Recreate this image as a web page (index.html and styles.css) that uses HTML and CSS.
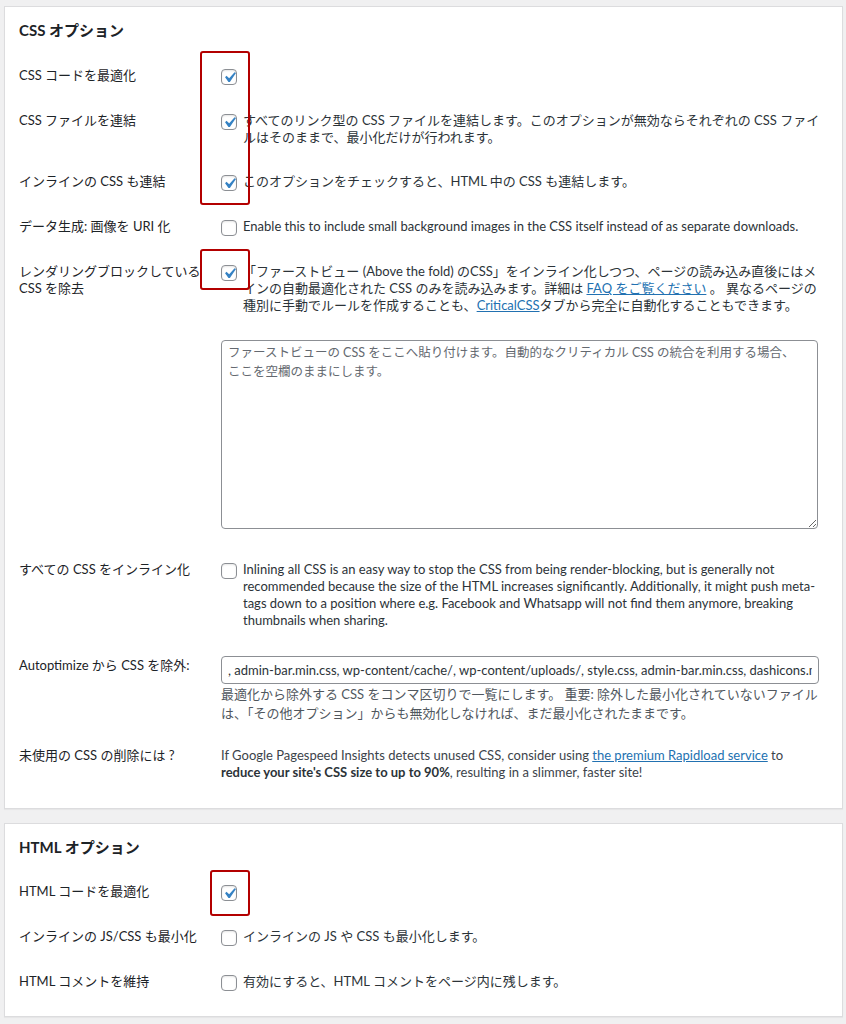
FILE: index.html
```html
<!DOCTYPE html>
<html lang="ja">
<head>
<meta charset="utf-8">
<title>Autoptimize CSS / HTML オプション</title>
<link rel="stylesheet" href="styles.css">
</head>
<body>
<div class="page">

  <section class="card card-css">
    <h2 class="card-title">CSS オプション</h2>

    <div class="row">
      <div class="label">CSS コードを最適化</div>
      <div class="control">
        <span class="opt"><span class="cb on"><svg viewBox="0 0 20 20"><path d="M14.83 4.89l1.34.94-5.81 8.38H9.02L5.78 9.67l1.34-1.25 2.57 2.4z"/></svg></span></span>
      </div>
    </div>

    <div class="row">
      <div class="label">CSS ファイルを連結</div>
      <div class="control">
        <span class="opt"><span class="cb on"><svg viewBox="0 0 20 20"><path d="M14.83 4.89l1.34.94-5.81 8.38H9.02L5.78 9.67l1.34-1.25 2.57 2.4z"/></svg></span><span class="opt-text">すべてのリンク型の CSS ファイルを連結します。このオプションが無効ならそれぞれの CSS ファイ<br>ルはそのままで、最小化だけが行われます。</span></span>
      </div>
    </div>

    <div class="row row-gap">
      <div class="label">インラインの CSS も連結</div>
      <div class="control">
        <span class="opt"><span class="cb on"><svg viewBox="0 0 20 20"><path d="M14.83 4.89l1.34.94-5.81 8.38H9.02L5.78 9.67l1.34-1.25 2.57 2.4z"/></svg></span><span class="opt-text">このオプションをチェックすると、HTML 中の CSS も連結します。</span></span>
      </div>
    </div>

    <div class="row">
      <div class="label">データ生成: 画像を URI 化</div>
      <div class="control">
        <span class="opt"><span class="cb"></span><span class="opt-text">Enable this to include small background images in the CSS itself instead of as separate downloads.</span></span>
      </div>
    </div>

    <div class="row">
      <div class="label">レンダリングブロックしている CSS を除去</div>
      <div class="control">
        <span class="opt"><span class="cb on"><svg viewBox="0 0 20 20"><path d="M14.83 4.89l1.34.94-5.81 8.38H9.02L5.78 9.67l1.34-1.25 2.57 2.4z"/></svg></span><span class="opt-text">「ファーストビュー (Above the fold) のCSS」をインライン化しつつ、ページの読み込み直後にはメ<br>インの自動最適化された CSS のみを読み込みます。詳細は <a href="#">FAQ をご覧ください</a> 。 異なるページの<br>種別に手動でルールを作成することも、<a href="#">CriticalCSS</a>タブから完全に自動化することもできます。</span></span>
      </div>
    </div>

    <div class="row row-textarea">
      <div class="label"></div>
      <div class="control">
        <textarea class="area" placeholder="ファーストビューの CSS をここへ貼り付けます。自動的なクリティカル CSS の統合を利用する場合、&#10;ここを空欄のままにします。"></textarea>
      </div>
    </div>

    <div class="row">
      <div class="label">すべての CSS をインライン化</div>
      <div class="control">
        <span class="opt"><span class="cb"></span><span class="opt-text">Inlining all CSS is an easy way to stop the CSS from being render-blocking, but is generally not<br>recommended because the size of the HTML increases significantly. Additionally, it might push meta-<br>tags down to a position where e.g. Facebook and Whatsapp will not find them anymore, breaking<br>thumbnails when sharing.</span></span>
      </div>
    </div>

    <div class="row row-input">
      <div class="label label-input">Autoptimize から CSS を除外:</div>
      <div class="control">
        <input class="text" type="text" value=", admin-bar.min.css, wp-content/cache/, wp-content/uploads/, style.css, admin-bar.min.css, dashicons.min.css">
        <p class="description">最適化から除外する CSS をコンマ区切りで一覧にします。 重要: 除外した最小化されていないファイル<br>は、「その他オプション」からも無効化しなければ、まだ最小化されたままです。</p>
      </div>
    </div>

    <div class="row">
      <div class="label">未使用の CSS の削除には ?</div>
      <div class="control">
        <p class="plain">If Google Pagespeed Insights detects unused CSS, consider using <a href="#">the premium Rapidload service</a> to<br><strong>reduce your site's CSS size to up to 90%</strong>, resulting in a slimmer, faster site!</p>
      </div>
    </div>
  </section>

  <section class="card card-html">
    <h2 class="card-title">HTML オプション</h2>

    <div class="row">
      <div class="label">HTML コードを最適化</div>
      <div class="control">
        <span class="opt"><span class="cb on"><svg viewBox="0 0 20 20"><path d="M14.83 4.89l1.34.94-5.81 8.38H9.02L5.78 9.67l1.34-1.25 2.57 2.4z"/></svg></span></span>
      </div>
    </div>

    <div class="row">
      <div class="label">インラインの JS/CSS も最小化</div>
      <div class="control">
        <span class="opt"><span class="cb"></span><span class="opt-text">インラインの JS や CSS も最小化します。</span></span>
      </div>
    </div>

    <div class="row">
      <div class="label">HTML コメントを維持</div>
      <div class="control">
        <span class="opt"><span class="cb"></span><span class="opt-text">有効にすると、HTML コメントをページ内に残します。</span></span>
      </div>
    </div>
  </section>

  <div class="mark mark-1"></div>
  <div class="mark mark-2"></div>
  <div class="mark mark-3"></div>
</div>
</body>
</html>
```

FILE: styles.css
```css
html, body {
  margin: 0;
  padding: 0;
  background: #f0f0f1;
}

body {
  font-family: "Lato", "Noto Sans CJK JP", sans-serif;
  font-size: 13px;
  line-height: 17px;
  color: #3c434a;
}

.page {
  position: relative;
  padding-top: 6px;
  padding-bottom: 8px;
}

.card {
  background: #fff;
  border: 1px solid #dcdcde;
  box-shadow: 0 1px 1px rgba(0, 0, 0, 0.04);
  margin: 0 3px 0 4px;
  padding: 13px 14px 13px;
}

.card + .card {
  margin-top: 14px;
}

.card-html {
  padding-bottom: 11px;
}

.card-title {
  margin: 0 0 13.5px;
  font-size: 15px;
  line-height: 20px;
  font-weight: 700;
  color: #1d2327;
}

.card-html .card-title {
  margin-bottom: 13px;
}

.row {
  display: grid;
  grid-template-columns: 202px 1fr;
  padding: 13.5px 0;
}

.label {
  color: #1d2327;
  padding-right: 10px;
}

.label-input {
  padding-top: 1px;
}

.control {
  min-width: 0;
}

.opt {
  display: flex;
  align-items: flex-start;
  gap: 6px;
}

.opt-text {
  white-space: nowrap;
  color: #2c3338;
}

.cb {
  flex: none;
  box-sizing: border-box;
  width: 16px;
  height: 16px;
  margin-top: 2px;
  border: 1px solid #8c8f94;
  border-radius: 4px;
  background: #fff;
  box-shadow: inset 0 1px 2px rgba(0, 0, 0, 0.1);
  position: relative;
}

.cb svg {
  position: absolute;
  left: -3px;
  top: -3px;
  width: 21px;
  height: 21px;
  fill: #3582c4;
}

a {
  color: #2271b1;
  text-decoration: underline;
}

.row-textarea {
  padding-top: 12px;
  padding-bottom: 18.5px;
}

.area {
  display: block;
  box-sizing: border-box;
  width: 597px;
  height: 189px;
  margin: 0;
  padding: 2px 6px;
  border: 1px solid #8c8f94;
  border-radius: 4px;
  font-family: "Lato", "Noto Sans CJK JP", sans-serif;
  font-size: 12.5px;
  line-height: 19px;
  color: #2c3338;
  resize: both;
}

.area::placeholder {
  color: #646970;
  opacity: 1;
}

.row-input {
  padding-top: 13.5px;
  padding-bottom: 11px;
}

.text {
  display: block;
  box-sizing: border-box;
  width: 598px;
  height: 28px;
  margin: 0;
  padding: 0 6px;
  border: 1px solid #8c8f94;
  border-radius: 4px;
  font-family: "Lato", "Noto Sans CJK JP", sans-serif;
  font-size: 13px;
  color: #2c3338;
  background: #fff;
}

.description {
  margin: 1px 0 0;
  line-height: 19px;
  color: #50575e;
  white-space: nowrap;
}

.plain {
  margin: 0;
  white-space: nowrap;
  color: #3c434a;
}

.plain strong {
  font-weight: 700;
  color: #2c3338;
}

.mark {
  position: absolute;
  box-sizing: border-box;
  border: 2px solid #b30000;
  border-radius: 3px;
  pointer-events: none;
}

.mark-1 {
  left: 200px;
  top: 51px;
  width: 50px;
  height: 154px;
}

.mark-2 {
  left: 200px;
  top: 249px;
  width: 50px;
  height: 41px;
}

.mark-3 {
  left: 210px;
  top: 870px;
  width: 40px;
  height: 46px;
}
```
